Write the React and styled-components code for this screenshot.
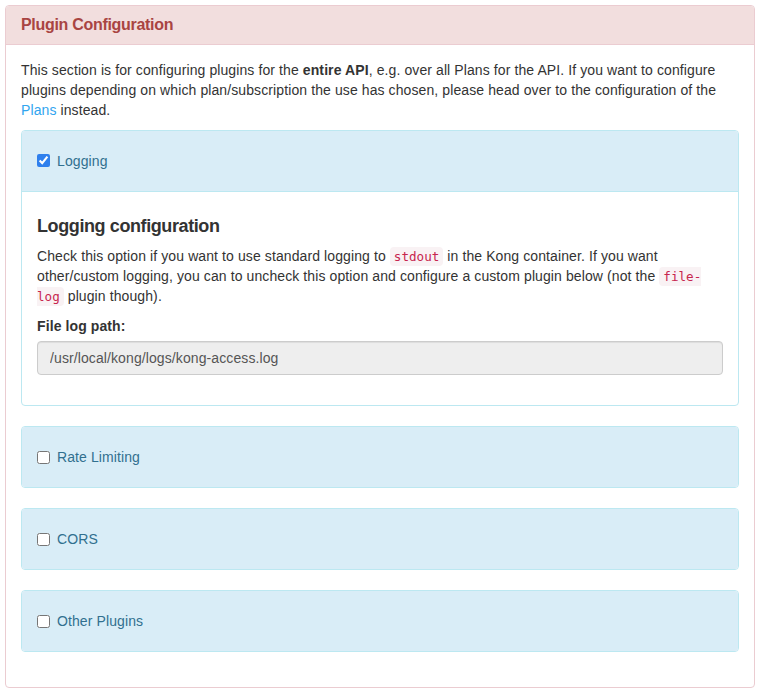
import React from "react"
import styled, { createGlobalStyle } from "styled-components"

const GlobalStyle = createGlobalStyle`
  * { box-sizing: border-box; }
  body {
    margin: 0;
    background: #fff;
    font-family: "Liberation Sans", Arial, sans-serif;
    font-size: 14px;
    line-height: 20px;
    letter-spacing: 0.1px;
    color: #333;
  }
`

const Page = styled.div`
  padding: 5px;
`

const Panel = styled.div`
  background: #fff;
  border: 1px solid ${(p) => p.$border};
  border-radius: 4px;
  margin-bottom: ${(p) => (p.$flush ? "0" : "20px")};
`

const PanelHeading = styled.div`
  background: ${(p) => p.$bg};
  color: ${(p) => p.$color};
  border-bottom: ${(p) => (p.$open ? `1px solid ${p.$border}` : "none")};
  border-radius: 3px 3px ${(p) => (p.$open ? "0 0" : "3px 3px")};
  padding: 10px 15px;
`

const PanelTitle = styled.h3`
  margin: 0;
  font-size: 16px;
  font-weight: bold;
  letter-spacing: -0.3px;
  line-height: 1.1;
`

const PanelBody = styled.div`
  padding: 15px;
`

const Text = styled.p`
  margin: 0 0 10px;
`

const Link = styled.a`
  color: #31a5ef;
  text-decoration: none;
`

const CheckRow = styled.label`
  display: flex;
  align-items: center;
  margin: 10px 0;
  line-height: 20px;
  font-size: 14px;
  cursor: pointer;
`

const Check = styled.input`
  width: 13px;
  height: 13px;
  margin: 0 7px 0 0;
  accent-color: #2f80ed;
`

const SubTitle = styled.h4`
  margin: 10px 0 10px;
  font-size: 18px;
  font-weight: bold;
  letter-spacing: -0.4px;
  line-height: 1.1;
  color: #333;
`

const Code = styled.code`
  font-family: "DejaVu Sans Mono", "Liberation Mono", monospace;
  font-size: 90%;
  line-height: 1;
  letter-spacing: 0;
  padding: 2px 4px;
  color: #c7254e;
  background: #f9f2f4;
  border-radius: 4px;
`

const FormGroup = styled.div`
  margin-bottom: 15px;
`

const FieldLabel = styled.label`
  display: block;
  font-weight: bold;
  margin-bottom: 5px;
`

const Input = styled.input`
  display: block;
  width: 100%;
  height: 34px;
  padding: 6px 12px;
  font-family: inherit;
  font-size: 14px;
  letter-spacing: 0.1px;
  color: #555;
  background: #eee;
  border: 1px solid #ccc;
  border-radius: 4px;
  box-shadow: inset 0 1px 1px rgba(0, 0, 0, 0.075);
`

const info = { bg: "#d9edf7", color: "#31708f", border: "#bce8f1" }

const PluginPanel = ({ title, checked, children }) => (
  <Panel $border={info.border}>
    <PanelHeading $bg={info.bg} $color={info.color} $border={info.border} $open={checked}>
      <CheckRow>
        <Check type="checkbox" defaultChecked={checked} />
        {title}
      </CheckRow>
    </PanelHeading>
    {checked && <PanelBody>{children}</PanelBody>}
  </Panel>
)

export default function App() {
  return (
    <Page>
      <GlobalStyle />
      <Panel $border="#ebccd1" $flush>
        <PanelHeading $bg="#f2dede" $color="#a94442" $border="#ebccd1" $open>
          <PanelTitle>Plugin Configuration</PanelTitle>
        </PanelHeading>
        <PanelBody>
          <Text>
            This section is for configuring plugins for the <b>entire API</b>, e.g. over all Plans for the API. If you
            want to configure plugins depending on which plan/subscription the use has chosen, please head over to the
            configuration of the <Link href="#">Plans</Link> instead.
          </Text>
          <PluginPanel title="Logging" checked>
            <SubTitle>Logging configuration</SubTitle>
            <Text>
              Check this option if you want to use standard logging to <Code>stdout</Code> in the Kong container. If
              you want other/custom logging, you can to uncheck this option and configure a custom plugin below (not
              the <Code>file-log</Code> plugin though).
            </Text>
            <FormGroup>
              <FieldLabel>File log path:</FieldLabel>
              <Input type="text" readOnly value="/usr/local/kong/logs/kong-access.log" />
            </FormGroup>
          </PluginPanel>
          <PluginPanel title="Rate Limiting" />
          <PluginPanel title="CORS" />
          <PluginPanel title="Other Plugins" />
        </PanelBody>
      </Panel>
    </Page>
  )
}
